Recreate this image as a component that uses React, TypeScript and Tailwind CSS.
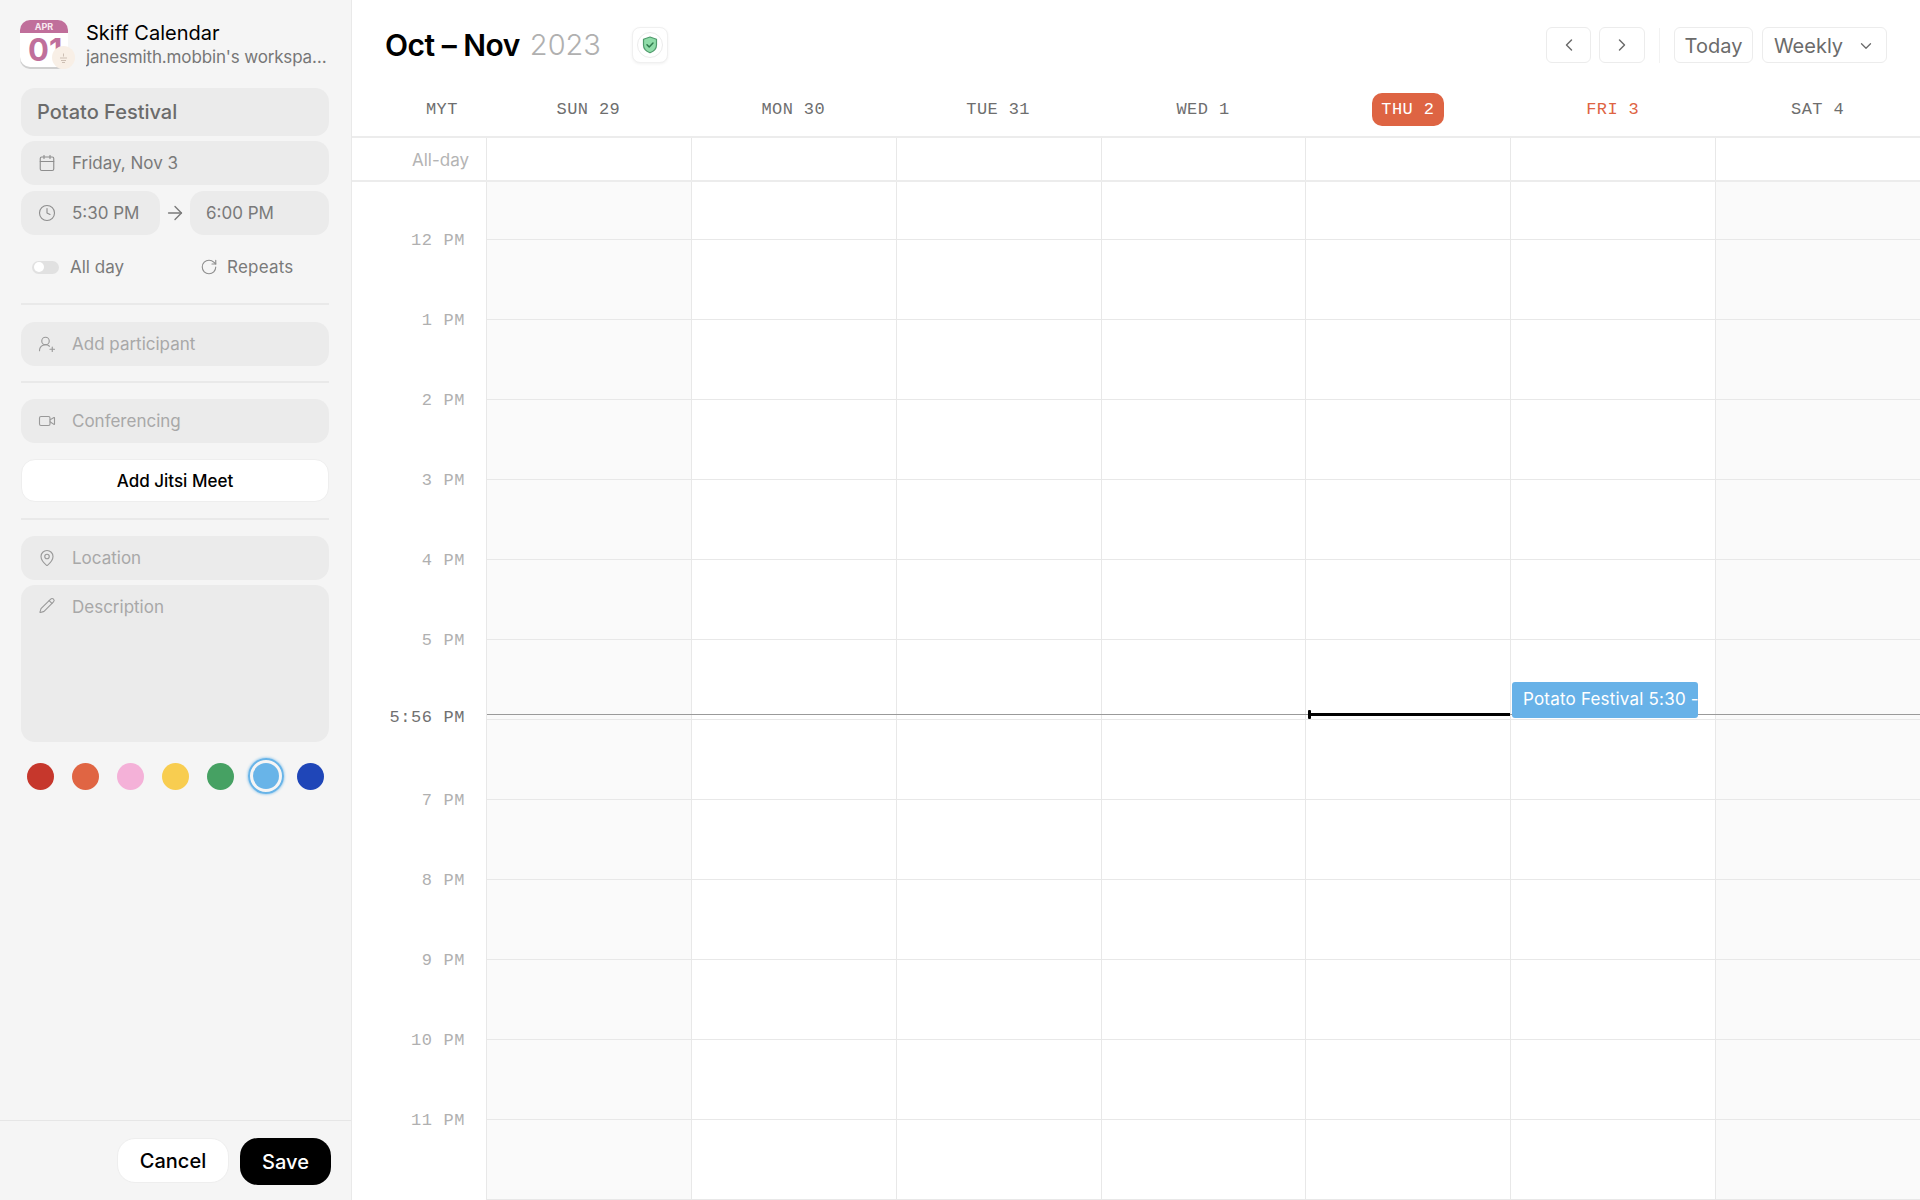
import { ArrowRight, Calendar, ChevronDown, ChevronLeft, ChevronRight, Clock, MapPin, Pencil, RotateCw, UserRoundPlus, Video } from "lucide-react";
import type { ReactNode } from "react";

const days = [
  { label: "SUN 29", weekend: true },
  { label: "MON 30" },
  { label: "TUE 31" },
  { label: "WED 1" },
  { label: "THU 2", today: true },
  { label: "FRI 3", selected: true },
  { label: "SAT 4", weekend: true },
];

const hours = ["12 PM", "1 PM", "2 PM", "3 PM", "4 PM", "5 PM", "5:56 PM", "7 PM", "8 PM", "9 PM", "10 PM", "11 PM"];
const colors = ["bg-[#c6372c]", "bg-[#e06543]", "bg-[#f4b1d8]", "bg-[#f8cd50]", "bg-[#46a163]", "bg-[#68b4e8]", "bg-[#1f46b8]"];

const mono = "font-['Liberation_Mono',monospace]";
const gridCols = "grid grid-cols-[134px_repeat(7,minmax(0,1fr))]";

export default function App() {
  return (
    <div className="flex h-[1200px] w-[1920px] overflow-hidden bg-white font-['Inter',sans-serif]">
      <Sidebar />
      <main className="flex min-w-0 flex-1 flex-col">
        <TopBar />
        <DayHeader />
        <div className={`${gridCols} h-[44px] border-b-2 border-[#ececec]`}>
          <div className="flex items-center justify-end pt-[3px] pr-[17px] text-[17px] text-[#b4b4b4]">All-day</div>
          {days.map((day) => (
            <div key={day.label} className="border-l border-[#e8e8e8]" />
          ))}
        </div>
        <CalendarBody />
      </main>
    </div>
  );
}

function Sidebar() {
  return (
    <aside className="flex h-full w-[352px] shrink-0 flex-col border-r border-[#e9e9e9] bg-[#f5f5f5]">
      <div className="pr-[22px] pl-[21px]">
        <div className="-ml-[1px] mt-[20px] flex h-[48px] items-center gap-[18px]">
          <Logo />
          <div className="min-w-0 flex-1 pt-[2px]">
            <p className="text-[20px] leading-[24px] text-black">Skiff Calendar</p>
            <p className="truncate text-[17px] leading-[24px] tracking-[-0.15px] text-[#777777]">janesmith.mobbin's workspace</p>
          </div>
        </div>

        <div className="mt-[20px] flex h-[48px] items-center rounded-[14px] bg-[#ebebeb] pl-[16px] text-[20px] font-medium text-[#6b6b6b]">
          Potato Festival
        </div>
        <Field className="mt-[5px]" icon={<Calendar size={18} strokeWidth={1.5} />} text="Friday, Nov 3" dark />
        <div className="mt-[6px] flex items-center">
          <Field className="w-[139px]" icon={<Clock size={18} strokeWidth={1.5} />} text="5:30 PM" dark />
          <ArrowRight size={22} strokeWidth={1.5} className="mx-[4px] shrink-0 text-[#7a7a7a]" />
          <div className="flex h-[44px] flex-1 items-center rounded-[14px] bg-[#ebebeb] pt-[2px] pl-[16px] text-[17px] text-[#7a7a7a]">6:00 PM</div>
        </div>

        <div className="mt-[20px] flex h-[24px] items-center pl-[11px] text-[17px] text-[#7a7a7a]">
          <span className="flex h-[13px] w-[27px] items-center rounded-full bg-[#e1e1e1] pl-[2px]">
            <span className="h-[10px] w-[10px] rounded-full bg-white" />
          </span>
          <span className="ml-[11px] pt-[2px]">All day</span>
          <RotateCw size={18} strokeWidth={1.5} className="ml-[76px] text-[#8e8e8e]" />
          <span className="ml-[9px] pt-[2px] tracking-[0.2px]">Repeats</span>
        </div>

        <div className="mt-[24px] h-[2px] bg-[#e9e9e9]" />
        <Field className="mt-[17px]" icon={<UserRoundPlus size={18} strokeWidth={1.5} />} text="Add participant" />
        <div className="mt-[15px] h-[2px] bg-[#e9e9e9]" />
        <Field className="mt-[16px]" icon={<Video size={18} strokeWidth={1.5} />} text="Conferencing" />
        <button className="mt-[16px] h-[43px] w-full rounded-[14px] border border-[#eeeeee] bg-white pt-[2px] text-[17px] font-medium text-black" type="button">
          Add Jitsi Meet
        </button>
        <div className="mt-[16px] h-[2px] bg-[#e9e9e9]" />
        <Field className="mt-[16px]" icon={<MapPin size={18} strokeWidth={1.5} />} text="Location" />
        <div className="mt-[5px] flex h-[157px] items-start rounded-[14px] bg-[#ebebeb] pt-[10px] pl-[17px] text-[17px] text-[#a8a8a8]">
          <Pencil size={17} strokeWidth={1.5} className="mt-[2px] mr-[16px] w-[18px] shrink-0 text-[#999999]" />
          Description
        </div>

        {/* fixed slots so the ringed swatch does not push its neighbours */}
        <div className="-ml-[3px] mt-[21px] flex h-[26px] items-center">
          {colors.map((color, i) => (
            <span key={color} className="flex w-[45px] shrink-0 justify-center">
              {i === 5 ? (
                <span className="flex h-[36px] w-[36px] items-center justify-center rounded-full border-[2.5px] border-[#68b4e8] shadow-[0_0_3px_#68b4e8]">
                  <span className={`h-[26px] w-[26px] rounded-full ${color}`} />
                </span>
              ) : (
                <span className={`h-[27px] w-[27px] rounded-full ${color}`} />
              )}
            </span>
          ))}
        </div>
      </div>

      <div className="mt-auto flex h-[80px] items-start justify-end gap-[11px] border-t border-[#e6e6e6] pt-[17px] pr-[20px]">
        <button className="h-[45px] w-[112px] rounded-[18px] border border-[#eeeeee] bg-white text-[20px] font-medium text-black" type="button">
          Cancel
        </button>
        <button className="h-[47px] w-[91px] rounded-[18px] bg-black text-[20px] font-medium text-white" type="button">
          Save
        </button>
      </div>
    </aside>
  );
}

function Logo() {
  return (
    <div className="relative h-[48px] w-[48px] shrink-0">
      <div className="h-[47px] w-[48px] overflow-hidden rounded-[10px] bg-white shadow-[0_2px_0_#cfcfcf]">
        <div className="flex h-[13px] items-center justify-center bg-[#c06f9b] text-[9px] font-bold leading-none text-[#f8e8f0]">APR</div>
        <div className="pl-[8px] text-[31px] font-bold leading-[33px] text-[#c06f9b]">01</div>
      </div>
      <div className="absolute top-[26px] left-[32px] flex h-[23px] w-[23px] items-center justify-center rounded-full bg-[#f8efe6]">
        <svg width="9" height="10" viewBox="0 0 9 10" fill="none" stroke="#cdbfb4" strokeWidth="1">
          <path d="M4.5 0.5v3M1 5h7M2 7.5h5M3 9.5h3" />
        </svg>
      </div>
    </div>
  );
}

function Field({ icon, text, dark, className = "" }: { icon: ReactNode; text: string; dark?: boolean; className?: string }) {
  return (
    <div className={`flex h-[44px] items-center rounded-[14px] bg-[#ebebeb] pl-[17px] text-[17px] ${dark ? "text-[#7a7a7a]" : "text-[#a8a8a8]"} ${className}`}>
      <span className={`mr-[16px] flex w-[18px] justify-center ${dark ? "text-[#8e8e8e]" : "text-[#999999]"}`}>{icon}</span>
      <span className="pt-[2px]">{text}</span>
    </div>
  );
}

function TopBar() {
  const button = "flex h-[36px] items-center justify-center rounded-[6px] border border-[#ececec] bg-white text-[#6b6b6b]";
  return (
    <header className="flex h-[88px] items-start justify-between pt-[27px] pr-[33px] pl-[33px]">
      <div className="flex items-center">
        <h1 className="text-[30px] leading-[36px] font-semibold tracking-[-0.5px] text-black">Oct – Nov</h1>
        <span className="ml-[10px] text-[29px] leading-[36px] font-light text-[#b0b0b0]">2023</span>
        <div className="ml-[31px] flex h-[36px] w-[36px] items-center justify-center rounded-[8px] border border-[#f0f0f0] bg-white shadow-[0_1px_3px_rgba(0,0,0,0.06)]">
          <span className="flex h-[26px] w-[26px] items-center justify-center rounded-full border border-[#ececec]">
            <svg width="16" height="18" viewBox="0 0 16 18" fill="none">
              <path d="M8 1 14.5 3.2V9c0 3.8-2.8 6.4-6.5 7.8C4.300 15.400 1.500 12.800 1.500 9V3.200Z" fill="#8fdca8" stroke="#4f9a6c" strokeWidth="1.200" strokeLinejoin="round" />
              <path d="M5 8.800 7.200 11 11 7" stroke="#2f7a4c" strokeWidth="1.500" strokeLinecap="round" strokeLinejoin="round" />
            </svg>
          </span>
        </div>
      </div>
      <div className="flex items-center text-[20px]">
        <div className={`${button} w-[45px]`}>
          <ChevronLeft size={20} strokeWidth={1.75} />
        </div>
        <div className={`${button} ml-[8px] w-[46px]`}>
          <ChevronRight size={20} strokeWidth={1.75} />
        </div>
        <div className="mx-[14px] h-[35px] w-px bg-[#f2f2f2]" />
        <div className={`${button} w-[79px] pt-[1px]`}>Today</div>
        <div className={`${button} ml-[9px] w-[125px] gap-[14px] pt-[1px]`}>
          Weekly
          <ChevronDown size={18} strokeWidth={1.75} />
        </div>
      </div>
    </header>
  );
}

function DayHeader() {
  return (
    <div className={`${gridCols} h-[50px] items-center border-b-2 border-[#ececec] pb-[5px] text-[17px] tracking-[0.4px] ${mono}`}>
      <div className="pl-[74px] text-[#6e6e6e]">MYT</div>
      {days.map((day) => (
        <div key={day.label} className="flex justify-center">
          {day.today ? (
            <span className="flex h-[33px] w-[72px] items-center justify-center rounded-[10px] bg-[#de6443] text-white">{day.label}</span>
          ) : (
            <span className={day.selected ? "text-[#de6443]" : "text-[#6e6e6e]"}>{day.label}</span>
          )}
        </div>
      ))}
    </div>
  );
}

function CalendarBody() {
  return (
    <div className={`${gridCols} relative min-h-0 flex-1`}>
      <div className={`flex flex-col items-end pt-[19px] pr-[21px] text-[17px] tracking-[0.6px] ${mono}`}>
        {hours.map((hour) => (
          <div key={hour} className={`flex h-[80px] shrink-0 items-center ${hour === "5:56 PM" ? "pb-[7px] text-[#707070]" : "text-[#b0b0b0]"}`}>
            {hour}
          </div>
        ))}
      </div>
      {days.map((day) => (
        <div key={day.label} className={`border-l border-[#e8e8e8] ${day.weekend ? "bg-[#fafafa]" : ""}`}>
          <div className="h-[58px] border-b border-[#e8e8e8]" />
          {hours.map((hour) => (
            <div key={hour} className="h-[80px] border-b border-[#e8e8e8]" />
          ))}
        </div>
      ))}

      {/* current time line and the event sit over the grid */}
      <div className="absolute top-[532px] right-0 left-[135px] h-px bg-[#9a9a9a]" />
      <div className="absolute top-[531px] left-[956px] h-[3px] w-[202px] bg-black" />
      <div className="absolute top-[528px] left-[956px] h-[9px] w-[3px] rounded-[1px] bg-black" />
      <div className="absolute top-[500px] left-[1160px] flex h-[36px] w-[186px] items-center overflow-hidden rounded-[3px] bg-[#68b2e8] pl-[11px] text-[17px] tracking-[0.2px] whitespace-nowrap text-white">
        Potato Festival 5:30 - 6:00 PM
      </div>
    </div>
  );
}
